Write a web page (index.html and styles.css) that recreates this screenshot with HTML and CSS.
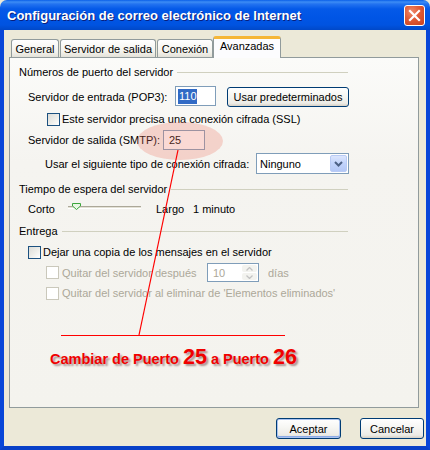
FILE: index.html
```html
<!DOCTYPE html>
<html lang="es">
<head>
<meta charset="utf-8">
<title>Configuración de correo electrónico de Internet</title>
<link rel="stylesheet" href="styles.css">
</head>
<body>
<div class="window">
  <div class="titlebar">
    <span class="title">Configuración de correo electrónico de Internet</span>
    <div class="close">
      <svg width="21" height="21" viewBox="0 0 21 21"><path d="M6 6 L15 15 M15 6 L6 15" stroke="#fff" stroke-width="2.2" stroke-linecap="square"/></svg>
    </div>
  </div>
  <div class="client">
    <div class="tabs">
      <div class="tab t-general">General</div>
      <div class="tab t-salida">Servidor de salida</div>
      <div class="tab t-conexion">Conexión</div>
      <div class="tab active t-avanz">Avanzadas</div>
    </div>
    <div class="panel">
      <div class="group-head"><span>Números de puerto del servidor</span><i class="rule"></i></div>

      <div class="row r-pop3">
        <span class="lbl w-pop3">Servidor de entrada (POP3):</span>
        <span class="input in-pop3"><span class="sel">110</span></span>
        <button class="btn btn-defaults">Usar predeterminados</button>
      </div>

      <div class="row r-ssl">
        <span class="chk"></span>
        <span class="chk-text">Este servidor precisa una conexión cifrada (SSL)</span>
      </div>

      <div class="row r-smtp">
        <span class="lbl w-smtp">Servidor de salida (SMTP):</span>
        <span class="input in-smtp">25</span>
      </div>

      <div class="row r-cifr">
        <span class="lbl w-cifr">Usar el siguiente tipo de conexión cifrada:</span>
        <span class="select"><span class="sel-val">Ninguno</span><span class="drop"><svg width="9" height="6" viewBox="0 0 9 6"><path d="M1 1 L4.5 4.5 L8 1" fill="none" stroke="#4D6185" stroke-width="2"/></svg></span></span>
      </div>

      <div class="group-head g2"><span>Tiempo de espera del servidor</span><i class="rule"></i></div>

      <div class="row r-slider">
        <span class="lbl w-corto">Corto</span>
        <span class="slider">
          <span class="track"></span>
          <svg class="thumb" width="9" height="7" viewBox="0 0 9 7"><path d="M0.5 0.5 H8.5 V3 L4.5 6.5 L0.5 3 Z" fill="#E9F6E4" stroke="#3CA63C"/></svg>
        </span>
        <span class="lbl w-largo">Largo</span>
        <span class="lbl">1 minuto</span>
      </div>

      <div class="group-head g3"><span>Entrega</span><i class="rule"></i></div>

      <div class="row r-dejar">
        <span class="chk"></span>
        <span class="chk-text">Dejar una copia de los mensajes en el servidor</span>
      </div>

      <div class="row r-quitar1 disabled">
        <span class="chk dis"></span>
        <span class="chk-text w-quitar">Quitar del servidor después</span>
        <span class="spinner"><span class="spin-val">10</span><span class="spin-btns"><span class="sb"><svg width="7" height="4" viewBox="0 0 7 4"><path d="M0.5 3.5 L3.5 0.5 L6.5 3.5" fill="none" stroke="#C3C3C3" stroke-width="1.3"/></svg></span><span class="sb"><svg width="7" height="4" viewBox="0 0 7 4"><path d="M0.5 0.5 L3.5 3.5 L6.5 0.5" fill="none" stroke="#C3C3C3" stroke-width="1.3"/></svg></span></span></span>
        <span class="dias">días</span>
      </div>

      <div class="row r-quitar2 disabled">
        <span class="chk dis"></span>
        <span class="chk-text">Quitar del servidor al eliminar de 'Elementos eliminados'</span>
      </div>

      <div class="note">
        <span class="n-small">Cambiar de Puerto </span><span class="n-big">25</span><span class="n-small"> a Puerto </span><span class="n-big">26</span>
      </div>
    </div>
    <div class="buttons">
      <button class="btn btn-ok">Aceptar</button>
      <button class="btn btn-cancel">Cancelar</button>
    </div>
  </div>

  <div class="highlight"></div>
  <svg class="annot" width="430" height="450" viewBox="0 0 430 450">
    <line x1="178" y1="150" x2="139" y2="335" stroke="#FF0000" stroke-width="1.2"/>
    <line x1="61" y1="335.5" x2="285" y2="335.5" stroke="#FF0000" stroke-width="1"/>
  </svg>
</div>
</body>
</html>
```

FILE: styles.css
```css
* { box-sizing: border-box; }

html, body {
  margin: 0;
  padding: 0;
  background: #ECE9D8;
}

body {
  font-family: "Liberation Sans", Arial, sans-serif;
  font-size: 11px;
  color: #000;
}

.window {
  position: relative;
  width: 430px;
  height: 450px;
  display: flex;
  flex-direction: column;
  overflow: hidden;
}

.titlebar {
  height: 30px;
  flex: none;
  display: flex;
  align-items: center;
  justify-content: space-between;
  padding: 0 5px 0 7px;
  background: linear-gradient(to bottom, #0A5FE8 0px, #3D8DF5 2px, #2373F0 4px, #0459E8 9px, #0055E5 18px, #0053E0 25px, #0048C8 30px);
  border-radius: 7px 7px 0 0;
}

.title {
  color: #fff;
  font-family: "Liberation Sans", Arial, sans-serif;
  font-weight: bold;
  font-size: 13px;
  text-shadow: 1px 1px 0 #0A1E7A;
  margin-top: 1px;
}

.close {
  width: 21px;
  height: 21px;
  border: 1px solid #fff;
  border-radius: 3px;
  background: radial-gradient(circle at 35% 30%, #F08A6C 0%, #E05A36 45%, #C8401E 100%);
  display: flex;
  align-items: center;
  justify-content: center;
  margin-top: 1px;
}
.close svg { display: block; margin: -1px; }

.client {
  flex: 1;
  background: #ECE9D8;
  border-left: 4px solid #0846D8;
  border-right: 4px solid #0846D8;
  border-bottom: 4px solid #0840C8;
  padding: 6px 0 0 5px;
  display: flex;
  flex-direction: column;
}

/* Tabs */
.tabs {
  display: flex;
  align-items: flex-end;
  height: 21px;
  margin-left: 2px;
  position: relative;
  z-index: 2;
}

.tab {
  height: 18px;
  border: 1px solid #919B9C;
  border-bottom: none;
  border-radius: 3px 3px 0 0;
  background: linear-gradient(to bottom, #FFFFFF, #F3F2EC 70%, #E3E1D8);
  display: flex;
  align-items: center;
  justify-content: center;
  padding-top: 1px;
  margin-right: 1px;
  white-space: nowrap;
}
.t-general { width: 48px; }
.t-salida { width: 96px; }
.t-conexion { width: 56px; }
.t-avanz { width: 68px; }
.tab.active {
  height: 22px;
  margin-bottom: -1px;
  background: #FCFCFE;
  border-top: 3px solid #F5B637;
  border-radius: 3px 3px 0 0;
  align-items: flex-start;
  padding-top: 1px;
  margin-left: -1px;
}

/* Panel */
.panel {
  width: 410px;
  height: 351px;
  border: 1px solid #919B9C;
  background: linear-gradient(to bottom, #FBFBF9 0%, #F5F4F0 30%, #F4F3EE 100%);
  padding: 7px 0 0 9px;
  display: flex;
  flex-direction: column;
  position: relative;
  z-index: 1;
}

.group-head {
  width: 329px;
  height: 14px;
  display: flex;
  align-items: center;
  white-space: nowrap;
}
.group-head .rule {
  flex: 1;
  height: 1px;
  background: #D0D0BF;
  margin-left: 4px;
}
.g2 { margin-top: 8px; }
.g3 { margin-top: 8px; }

.row {
  display: flex;
  align-items: center;
  white-space: nowrap;
}
.lbl { display: inline-block; }

.r-pop3 { height: 21px; margin-top: 7px; margin-left: 9px; }
.w-pop3 { width: 147px; }

.input {
  display: flex;
  align-items: center;
  height: 20px;
  border: 1px solid #7F9DB9;
  background: #fff;
  padding-left: 2px;
}
.in-pop3 { width: 41px; margin-top: -1px; }
.sel {
  background: #316AC5;
  color: #fff;
  padding: 1px 0 1px 1px;
  line-height: 13px;
}
.in-smtp { width: 42px; padding-left: 5px; }

.btn {
  font-family: "Liberation Sans", Arial, sans-serif;
  font-size: 11px;
  color: #000;
  border: 1px solid #003C74;
  border-radius: 3px;
  background: linear-gradient(to bottom, #FFFFFF 0%, #F7F7F4 40%, #ECEBE6 85%, #D6D0C5 100%);
  padding: 0;
  margin: 0;
}
.btn-defaults {
  width: 122px;
  height: 20px;
  margin-left: 11px;
  margin-top: 1px;
}

.r-ssl { height: 14px; margin-top: 5px; margin-left: 28px; }

.chk {
  width: 13px;
  height: 13px;
  border: 1px solid #1C5180;
  background: linear-gradient(135deg, #DCDCD7 0%, #F0F0EC 60%, #FFFFFF 100%);
  flex: none;
}
.chk.dis {
  border-color: #CAC8BB;
  background: #FFFFFF;
}
.chk-text { margin-left: 2px; }

.r-smtp { height: 20px; margin-top: 4px; margin-left: 9px; }
.w-smtp { width: 135px; }

.r-cifr { height: 21px; margin-top: 3px; margin-left: 26px; }
.w-cifr { width: 211px; }

.select {
  width: 93px;
  height: 21px;
  border: 1px solid #7F9DB9;
  background: #fff;
  display: flex;
  align-items: center;
  justify-content: space-between;
  padding: 1px;
}
.sel-val { padding-left: 2px; }
.drop {
  width: 17px;
  height: 17px;
  border-radius: 2px;
  background: linear-gradient(to bottom, #DCE6FD, #C1D3FB 50%, #B4C8F6);
  border: 1px solid #B9CBF5;
  display: flex;
  align-items: center;
  justify-content: center;
}

.r-slider { height: 14px; margin-top: 6px; margin-left: 9px; }
.w-corto { width: 40px; }
.slider {
  width: 73px;
  height: 14px;
  position: relative;
  display: flex;
  align-items: center;
}
.track {
  display: block;
  width: 100%;
  height: 3px;
  border-top: 1px solid #ACA899;
  border-bottom: 1px solid #FFFFFF;
  background: #E4E2D6;
  margin-top: -4px;
}
.thumb {
  position: absolute;
  left: 4px;
  top: 1px;
}
.w-largo { width: 37px; margin-left: 15px; }

.r-dejar { height: 14px; margin-top: 7px; margin-left: 9px; }

.disabled { color: #ACA899; }
.r-quitar1 { height: 19px; margin-top: 4px; margin-left: 27px; }
.r-quitar1 .chk-text, .r-quitar2 .chk-text { margin-left: 3px; }
.w-quitar { width: 145px; }

.spinner {
  width: 52px;
  height: 19px;
  border: 1px solid #7F9DB9;
  background: #fff;
  display: flex;
  align-items: stretch;
  justify-content: space-between;
  padding: 1px;
}
.spin-val { padding-left: 4px; display: flex; align-items: center; }
.spin-btns {
  width: 15px;
  display: flex;
  flex-direction: column;
  gap: 1px;
}
.sb {
  flex: 1;
  background: #F3F3EF;
  border-radius: 2px;
  display: flex;
  align-items: center;
  justify-content: center;
}
.dias { margin-left: 9px; }

.r-quitar2 { height: 14px; margin-top: 4px; margin-left: 27px; }

/* Annotation */
.note {
  margin-top: 45px;
  margin-left: 31px;
  display: flex;
  align-items: baseline;
  white-space: pre;
  color: #F00000;
  font-family: "Liberation Sans", Arial, sans-serif;
  font-weight: bold;
  text-shadow: 2px 2px 2px rgba(60, 0, 0, 0.4);
}
.n-small { font-size: 14.5px; }
.n-big { font-size: 21.5px; }

/* Buttons */
.buttons {
  display: flex;
  justify-content: flex-end;
  gap: 19px;
  margin-top: 10px;
  width: 415px;
}
.btn-ok {
  width: 65px;
  height: 21px;
  box-shadow: inset 0 0 0 1px #A9C2F0, inset 0 -1px 0 1px #8CAAE6;
}
.btn-cancel {
  width: 64px;
  height: 21px;
}

/* Overlays */
.highlight {
  position: absolute;
  left: 137px;
  top: 122px;
  width: 86px;
  height: 38px;
  border-radius: 50%;
  background: rgba(238, 120, 100, 0.28);
  z-index: 5;
  pointer-events: none;
}
.annot {
  position: absolute;
  left: 0;
  top: 0;
  z-index: 6;
  pointer-events: none;
}
```
